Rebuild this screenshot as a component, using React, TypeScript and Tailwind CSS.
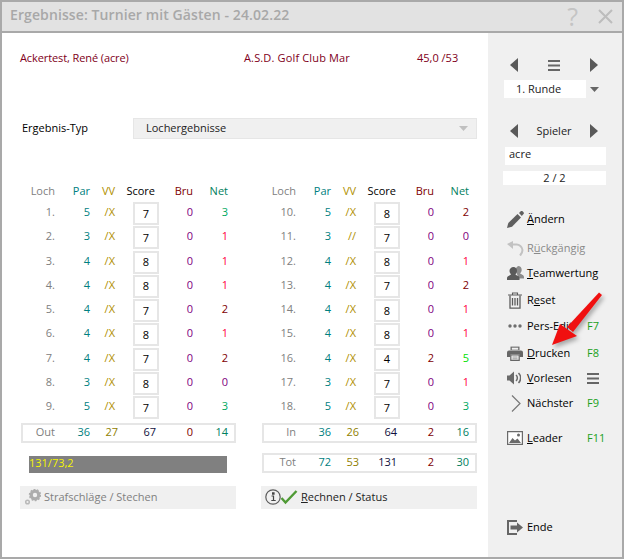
import type { ReactNode } from 'react'

type Hole = { n: number; par: number; vv: string; score: number; bru: number; net: number }

const front: Hole[] = [
  { n: 1, par: 5, vv: '/X', score: 7, bru: 0, net: 3 },
  { n: 2, par: 3, vv: '/X', score: 7, bru: 0, net: 1 },
  { n: 3, par: 4, vv: '/X', score: 8, bru: 0, net: 1 },
  { n: 4, par: 4, vv: '/X', score: 8, bru: 0, net: 1 },
  { n: 5, par: 4, vv: '/X', score: 7, bru: 0, net: 2 },
  { n: 6, par: 4, vv: '/X', score: 8, bru: 0, net: 1 },
  { n: 7, par: 4, vv: '/X', score: 7, bru: 0, net: 2 },
  { n: 8, par: 3, vv: '/X', score: 8, bru: 0, net: 0 },
  { n: 9, par: 5, vv: '/X', score: 7, bru: 0, net: 3 }
]

const back: Hole[] = [
  { n: 10, par: 5, vv: '/X', score: 8, bru: 0, net: 2 },
  { n: 11, par: 3, vv: '//', score: 7, bru: 0, net: 0 },
  { n: 12, par: 4, vv: '/X', score: 8, bru: 0, net: 1 },
  { n: 13, par: 4, vv: '/X', score: 7, bru: 0, net: 2 },
  { n: 14, par: 4, vv: '/X', score: 8, bru: 0, net: 1 },
  { n: 15, par: 4, vv: '/X', score: 8, bru: 0, net: 1 },
  { n: 16, par: 4, vv: '/X', score: 4, bru: 2, net: 5 },
  { n: 17, par: 3, vv: '/X', score: 7, bru: 0, net: 1 },
  { n: 18, par: 5, vv: '/X', score: 7, bru: 0, net: 3 }
]

// colour of a point value, same for Bru and Net
function pointClass(v: number): string {
  if (v === 0) return 'text-[#800080]'
  if (v === 1) return 'text-[#ff0040]'
  if (v === 2) return 'text-[#800000]'
  if (v === 3) return 'text-[#00a860]'
  return 'text-[#00e000]'
}

function HeaderRow() {
  return (
    <div className="flex h-4 items-center text-right">
      <span className="w-[34px] text-[#808080]">Loch</span>
      <span className="w-[35px] text-[#008080]">Par</span>
      <span className="w-[25px] text-[#b09000]">VV</span>
      <span className="w-[40px] text-black">Score</span>
      <span className="w-[38px] text-[#800000]">Bru</span>
      <span className="w-[35px] text-[#008060]">Net</span>
    </div>
  )
}

function HoleRow({ hole }: { hole: Hole }) {
  return (
    <div className="flex h-[24.3px] items-start text-right">
      <span className="mt-[2px] w-[34px] text-[#808080]">{hole.n}.</span>
      <span className="mt-[2px] w-[35px] text-[#008080]">{hole.par}</span>
      <span className="mt-[2px] w-[25px] text-[#b09000]">{hole.vv}</span>
      <span className="ml-[18px] flex h-[23px] w-[26px] items-center justify-center border-2 border-[#e6e6e6] bg-white text-black">
        {hole.score}
      </span>
      <span className={`mt-[2px] w-[34px] ${pointClass(hole.bru)}`}>{hole.bru}</span>
      <span className={`mt-[2px] w-[35px] ${pointClass(hole.net)}`}>{hole.net}</span>
    </div>
  )
}

function TotalRow({ label, par, vv, score, bru, net }: { label: string; par: number; vv: number; score: number; bru: number; net: number }) {
  return (
    <div className="flex h-5 items-center border-2 border-[#e6e6e6] pb-[2px] text-right">
      <span className="w-[32px] text-[#808080]">{label}</span>
      <span className="w-[35px] text-[#008080]">{par}</span>
      <span className="w-[28px] text-[#908000]">{vv}</span>
      <span className="w-[38px] text-[#101040]">{score}</span>
      <span className="w-[37px] text-[#800000]">{bru}</span>
      <span className="w-[35px] text-[#008060]">{net}</span>
    </div>
  )
}

function ActionBar({ children }: { children: ReactNode }) {
  return (
    <div className="-ml-px mt-[13px] flex h-[23px] w-[216px] items-center bg-[#f0f0f0]">{children}</div>
  )
}

function Triangle({ dir }: { dir: 'left' | 'right' }) {
  return (
    <svg width="8" height="14" viewBox="0 0 8 14" className="block">
      <path d={dir === 'left' ? 'M8 0V14L0 7Z' : 'M0 0V14L8 7Z'} fill="#595959" />
    </svg>
  )
}

function Hamburger() {
  return (
    <svg width="12" height="11" viewBox="0 0 12 11" className="block">
      <path d="M0 0h12v2H0zM0 4.500h12v2H0zM0 9h12v2H0z" fill="#666" />
    </svg>
  )
}

const icons: Record<string, ReactNode> = {
  pencil: (
    <svg width="17" height="17" viewBox="0 0 17 17">
      <path d="M0 17l1.300-5L10.500 3l3.500 3.500L5 15.700z" fill="#5f5f5f" />
      <path d="M12 2l1.800-1.700c.6-.5 1.200-.4 1.700 0l1 1c.5.600.5 1.200 0 1.800L14.800 5z" fill="#5f5f5f" />
    </svg>
  ),
  undo: (
    <svg width="17" height="15" viewBox="0 0 17 15">
      <path d="M4 3.500h5a6 6 0 0 1 6.500 5.500c0 2.500-1 4-2.500 5.500" fill="none" stroke="#c2c2c2" strokeWidth="2" />
      <path d="M0 3l6-3v8z" fill="#c2c2c2" />
    </svg>
  ),
  team: (
    <svg width="17" height="14" viewBox="0 0 17 14">
      <path d="M11 0c2.300 0 3.700 1.700 3.700 3.800 0 1.400-.6 2.700-1.500 3.500.3 1.200 3.800 1.300 3.800 3.700v1.500h-5L9 6V2z" fill="#8c8c8c" />
      <path d="M6.500 1C8.700 1 10 2.800 10 4.800c0 1.500-.6 2.800-1.500 3.500.3 1.400 4 1.300 4 3.800V14H0v-1.900c0-2.500 3.700-2.400 4-3.800C3.100 7.600 2.500 6.300 2.500 4.800 2.500 2.800 4.300 1 6.500 1z" fill="#5a5a5a" />
    </svg>
  ),
  trash: (
    <svg width="14" height="17" viewBox="0 0 14 17" className="ml-px">
      <path d="M0 3h14M4.500 3V1h5v2" fill="none" stroke="#5c5c5c" strokeWidth="1.100" />
      <path d="M2 3.500v12.700h10V3.500" fill="none" stroke="#5c5c5c" strokeWidth="1.300" />
      <path d="M4.500 6v7.500M7 6v7.500M9.500 6v7.500" fill="none" stroke="#5c5c5c" strokeWidth="1.300" />
    </svg>
  ),
  dots: (
    <svg width="14" height="4" viewBox="0 0 14 4" className="ml-px">
      <circle cx="2" cy="2" r="1.700" fill="#6e6e6e" />
      <circle cx="7" cy="2" r="1.700" fill="#6e6e6e" />
      <circle cx="12" cy="2" r="1.700" fill="#6e6e6e" />
    </svg>
  ),
  printer: (
    <svg width="16" height="15" viewBox="0 0 16 15">
      <path d="M3.500.600h9v3.500h-9z" fill="#6a6a6a" />
      <path d="M4.800 1.700h6.400v2H4.800z" fill="#f0f0f0" />
      <path d="M2 4.500h12a2 2 0 0 1 2 2V11h-3.500V8.500h-9V11H0V6.500a2 2 0 0 1 2-2z" fill="#666" />
      <path d="M3.800 9h8.400v5.400H3.800z" fill="#f0f0f0" stroke="#666" strokeWidth="1.200" />
      <path d="M5.500 11h5M5.500 12.800h5" stroke="#888" strokeWidth="0.800" />
    </svg>
  ),
  speaker: (
    <svg width="14" height="14" viewBox="0 0 14 14">
      <path d="M0 4.500h2.500L7 .500v13L2.500 9.500H0z" fill="#6a6a6a" />
      <path d="M9 4a4 4 0 0 1 0 6M11.500 2a7 7 0 0 1 0 10" fill="none" stroke="#6a6a6a" strokeWidth="1.500" />
    </svg>
  ),
  chevron: (
    <svg width="10" height="17" viewBox="0 0 10 17" className="ml-[4px]">
      <path d="M1 .500l8 8-8 8" fill="none" stroke="#777" strokeWidth="1.200" />
    </svg>
  ),
  image: (
    <svg width="16" height="14" viewBox="0 0 16 14">
      <path d="M.600.600h14.800v12.800H.600z" fill="#fff" stroke="#6a6a6a" strokeWidth="1.200" />
      <path d="M2 12l3.500-5 2.500 2.500 2.500-2 3.500 4.500z" fill="#6a6a6a" />
      <circle cx="11.500" cy="4" r="1.500" fill="#6a6a6a" />
    </svg>
  ),
  exit: (
    <svg width="16" height="15" viewBox="0 0 16 15">
      <path d="M10 1H1v13h9" fill="none" stroke="#666" strokeWidth="2" />
      <path d="M3.500 5.500H10V2.500l6 5-6 5v-3H3.500z" fill="#666" />
    </svg>
  )
}

function SideRow({ icon, label, fkey, muted, h }: { icon: string; label: ReactNode; fkey?: ReactNode; muted?: boolean; h: string }) {
  return (
    <div className={h}>
      <div className="flex h-[26px] items-center pl-[19px]">
        <span className="flex w-[20px] shrink-0 items-center">{icons[icon]}</span>
        <span className={`w-[60px] shrink-0 ${muted ? 'text-[#8a8a8a]' : 'text-black'}`}>{label}</span>
        {fkey && <span className="text-[#1aa01a]">{fkey}</span>}
      </div>
    </div>
  )
}

export default function App() {
  return (
    <div className="relative flex h-[559px] w-[624px] flex-col overflow-hidden border-2 border-[#a9a9a9] bg-white font-['Open_Sans',sans-serif] text-[11px] leading-4">
      <div className="flex h-[31px] shrink-0 items-center justify-between border-b-2 border-[#a9a9a9] bg-[#e2e2e2] pl-[8px] pr-[9px]">
        <span className="pb-[3px] text-[14px] font-semibold tracking-[0.1px] text-[#a8a8a8]">
          Ergebnisse: Turnier mit Gästen - 24.02.22
        </span>
        <div className="flex items-center gap-[20px]">
          <span className="text-[25px] leading-none text-[#c4c4c4]">?</span>
          <svg width="15" height="15" viewBox="0 0 15 15" className="block">
            <path d="M1 1l13 13M14 1L1 14" stroke="#bdbdbd" strokeWidth="2" />
          </svg>
        </div>
      </div>

      <div className="flex min-h-0 flex-1">
        <div className="w-[486px] shrink-0">
          <div className="mt-[17px] flex h-4 items-center pl-[18px] text-[#800020]">
            <span className="w-[224px] tracking-[-0.1px]">Ackertest, René (acre)</span>
            <span className="w-[173px] tracking-[0.15px]">A.S.D. Golf Club Mar</span>
            <span>45,0 /53</span>
          </div>

          <div className="mt-[52px] flex h-[21px] items-center pl-[20px]">
            <span className="w-[111px] pb-[1px] text-black">Ergebnis-Typ</span>
            <div className="flex h-[21px] w-[344px] items-center justify-between border border-[#e6e6e6] bg-[#f0f0f0] pb-[1px] pl-[12px] pr-[8px] text-[#222]">
              <span>Lochergebnisse</span>
              <svg width="9" height="5" viewBox="0 0 9 5" className="block">
                <path d="M0 0h9L4.500 5z" fill="#c0c0c0" />
              </svg>
            </div>
          </div>

          <div className="mt-[44px] flex gap-[26px] pl-[19px]">
            <div className="w-[215px]">
              <HeaderRow />
              <div className="mb-[2px] mt-[3px]">
                {front.map((hole) => (
                  <HoleRow key={hole.n} hole={hole} />
                ))}
              </div>
              <TotalRow label="Out" par={36} vv={27} score={67} bru={0} net={14} />
              <div className="ml-[8px] mt-[13px] h-[17px] w-[198px] bg-[#808080] text-[11px] leading-[13px] text-[#f5f500]">
                131/73,2
              </div>
              <ActionBar>
                <svg width="17" height="16" viewBox="0 0 17 16" className="ml-[4px] mr-[3px]">
                  <circle cx="11" cy="6" r="3.800" fill="none" stroke="#adadad" strokeWidth="3.200" />
                  <circle cx="11" cy="6" r="5.500" fill="none" stroke="#adadad" strokeWidth="1.400" strokeDasharray="1.800 1.600" />
                  <circle cx="3.500" cy="13" r="1.800" fill="none" stroke="#b8b8b8" strokeWidth="1.500" />
                </svg>
                <span className="text-[#808080]">Strafschläge / Stechen</span>
              </ActionBar>
            </div>

            <div className="w-[215px]">
              <HeaderRow />
              <div className="mb-[2px] mt-[3px]">
                {back.map((hole) => (
                  <HoleRow key={hole.n} hole={hole} />
                ))}
              </div>
              <TotalRow label="In" par={36} vv={26} score={64} bru={2} net={16} />
              <div className="mt-[10px]">
                <TotalRow label="Tot" par={72} vv={53} score={131} bru={2} net={30} />
              </div>
              <ActionBar>
                <svg width="33" height="16" viewBox="0 0 33 16" className="ml-[4px] mr-[3px]">
                  <circle cx="8" cy="8" r="7.200" fill="none" stroke="#5c5c5c" strokeWidth="1.200" />
                  <path d="M6.500 7H8.500V11.500M6.300 11.500h4.400M7.600 3.800h1.400v1.400H7.600z" fill="none" stroke="#444" strokeWidth="1.200" />
                  <path d="M16.500 9l4 4.500L31.500 2" fill="none" stroke="#4f9a35" strokeWidth="2.400" />
                </svg>
                <span className="text-[#222]">
                  <u>R</u>echnen / Status
                </span>
              </ActionBar>
            </div>
          </div>
        </div>

        <div className="w-[134px] shrink-0 bg-[#f0f0f0]">
          <div className="ml-[22px] mt-[25px] flex h-[14px] w-[88px] items-center justify-between">
            <Triangle dir="left" />
            <Hamburger />
            <Triangle dir="right" />
          </div>
          <div className="ml-[16px] mt-[8px] flex h-[18px] items-center">
            <span className="h-[18px] w-[82px] bg-white pl-[12px] pt-[1px] text-[#222]">1. Runde</span>
            <svg width="9" height="5" viewBox="0 0 9 5" className="ml-[4px] block">
              <path d="M0 0h9L4.500 5z" fill="#666" />
            </svg>
          </div>
          <div className="ml-[22px] mt-[26px] flex h-[14px] w-[88px] items-center justify-between">
            <Triangle dir="left" />
            <span className="text-[#222]">Spieler</span>
            <Triangle dir="right" />
          </div>
          <div className="ml-[17px] mt-[9px] h-[18px] w-[101px] bg-white pl-[4px] leading-[14px] text-[#222]">acre</div>
          <div className="ml-[15px] mt-[6px] h-[14px] w-[103px] bg-white text-center leading-[14px] text-[#222]">2 / 2</div>

          <div className="mt-[21px]">
            <SideRow icon="pencil" h="h-[29px]" label={<><u>Ä</u>ndern</>} />
            <SideRow icon="undo" h="h-[25px]" muted label={<>R<u>ü</u>ckgängig</>} />
            <SideRow icon="team" h="h-[27px]" label={<><u>T</u>eamwertung</>} />
            <SideRow icon="trash" h="h-[26px]" label={<>R<u>e</u>set</>} />
            <SideRow icon="dots" h="h-[27px]" label="Pers-Edit" fkey="F7" />
            <SideRow icon="printer" h="h-[25px]" label={<><u>D</u>rucken</>} fkey="F8" />
            <SideRow
              icon="speaker"
              h="h-[25px]"
              label={<><u>V</u>orlesen</>}
              fkey={
                <svg width="12" height="11" viewBox="0 0 12 11" className="block">
                  <path d="M0 0h12v2H0zM0 4.500h12v2H0zM0 9h12v2H0z" fill="#666" />
                </svg>
              }
            />
            <SideRow icon="chevron" h="h-[28px]" label="Nächster" fkey="F9" />
          </div>
          <div className="mt-[7px]">
            <SideRow icon="image" label={<><u>L</u>eader</>} fkey="F11" h="h-[26px]" />
          </div>
          <div className="mt-[63px]">
            <SideRow icon="exit" label="Ende" h="h-[26px]" />
          </div>
        </div>
      </div>

      {/* red annotation arrow painted over the sidebar */}
      <svg width="70" height="70" viewBox="0 0 70 70" className="absolute left-[538px] top-[288px] drop-shadow-[2px_3px_2px_rgba(0,0,0,0.3)]">
        <path d="M59 2.500L62 5 33 42 27 37z" fill="#f01010" />
        <path d="M12 55L20 34 37 46z" fill="#f01010" />
      </svg>
    </div>
  )
}
